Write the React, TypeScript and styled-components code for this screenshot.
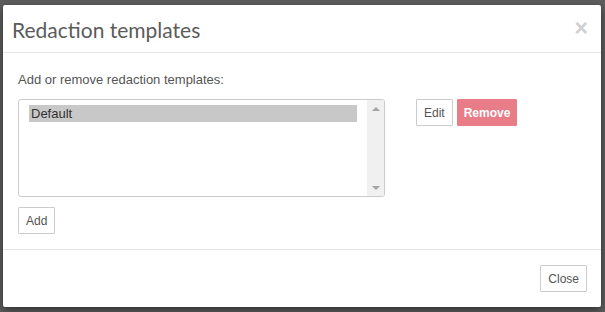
import { createGlobalStyle, styled } from "styled-components"

const Global = createGlobalStyle`
    html, body {
        margin: 0;
        padding: 0;
    }
    body {
        font-family: "Liberation Sans", Arial, sans-serif;
    }
`

const Backdrop = styled.div`
    width: 605px;
    height: 312px;
    background-color: #5e5e5e;
    padding: 5px 0 0 3px;
    box-sizing: border-box;
    overflow: hidden;
`

const Modal = styled.div`
    width: 598px;
    height: 302px;
    background-color: #ffffff;
    border-radius: 2px;
    box-shadow: 0 3px 9px rgba(0, 0, 0, 0.5);
    display: flex;
    flex-direction: column;
`

const Header = styled.div`
    height: 48px;
    box-sizing: border-box;
    border-bottom: 1px solid #e5e5e5;
    display: flex;
    align-items: center;
    justify-content: space-between;
    padding: 0 13px 0 9px;
`

const Title = styled.h4`
    margin: 0;
    font-family: "Lato", "Noto Sans", sans-serif;
    font-weight: 400;
    font-size: 21px;
    color: #5b5b5b;
    padding-top: 2px;
`

const CloseX = styled.span`
    font-family: "Liberation Sans", Arial, sans-serif;
    font-size: 23px;
    font-weight: 700;
    color: #d0d0d0;
    line-height: 1;
`

const Body = styled.div`
    flex: 1;
    padding: 19px 15px 0 15px;
    border-bottom: 1px solid #e5e5e5;
`

const Intro = styled.p`
    margin: 0 0 12px 0;
    font-size: 13px;
    color: #555555;
`

const Row = styled.div`
    display: flex;
    align-items: flex-start;
`

const ListBox = styled.div`
    width: 367px;
    height: 98px;
    box-sizing: border-box;
    border: 1px solid #cccccc;
    border-radius: 3px;
    display: flex;
    overflow: hidden;
`

const Options = styled.div`
    flex: 1;
    padding: 5px 10px 0 10px;
`

const Option = styled.div<{ $selected?: boolean }>`
    height: 17px;
    line-height: 17px;
    padding-left: 2px;
    font-size: 13px;
    color: #333333;
    background-color: ${p => (p.$selected ? "#c8c8c8" : "transparent")};
`

const ScrollTrack = styled.div`
    width: 17px;
    background-color: #f0f0f0;
    display: flex;
    flex-direction: column;
    justify-content: space-between;
    align-items: center;
    padding: 7px 0 6px 0;
`

const Arrow = styled.div<{ $down?: boolean }>`
    width: 0;
    height: 0;
    border-left: 4px solid transparent;
    border-right: 4px solid transparent;
    ${p => (p.$down ? "border-top: 4px solid #a3a3a3;" : "border-bottom: 4px solid #a3a3a3;")}
`

const Actions = styled.div`
    display: flex;
    gap: 4px;
    margin-left: 31px;
`

const Button = styled.button<{ $danger?: boolean }>`
    height: 27px;
    box-sizing: border-box;
    padding: 0 ${p => (p.$danger ? 6 : 7)}px;
    font-family: "Liberation Sans", Arial, sans-serif;
    font-size: 12px;
    font-weight: ${p => (p.$danger ? 700 : 400)};
    color: ${p => (p.$danger ? "#ffffff" : "#555555")};
    background-color: ${p => (p.$danger ? "#e87c87" : "#ffffff")};
    border: 1px solid ${p => (p.$danger ? "#e87c87" : "#cccccc")};
    border-radius: 1px;
`

const AddButton = styled(Button)`
    margin-top: 10px;
`

const Footer = styled.div`
    height: 57px;
    display: flex;
    justify-content: flex-end;
    align-items: flex-start;
    padding: 15px 14px 0 0;
    box-sizing: border-box;
`

export default function App() {
    return (
        <>
            <Global />
            <Backdrop>
                <Modal>
                    <Header>
                        <Title>Redaction templates</Title>
                        <CloseX>×</CloseX>
                    </Header>
                    <Body>
                        <Intro>Add or remove redaction templates:</Intro>
                        <Row>
                            <ListBox>
                                <Options>
                                    <Option $selected>Default</Option>
                                </Options>
                                <ScrollTrack>
                                    <Arrow />
                                    <Arrow $down />
                                </ScrollTrack>
                            </ListBox>
                            <Actions>
                                <Button>Edit</Button>
                                <Button $danger>Remove</Button>
                            </Actions>
                        </Row>
                        <AddButton>Add</AddButton>
                    </Body>
                    <Footer>
                        <Button>Close</Button>
                    </Footer>
                </Modal>
            </Backdrop>
        </>
    )
}
